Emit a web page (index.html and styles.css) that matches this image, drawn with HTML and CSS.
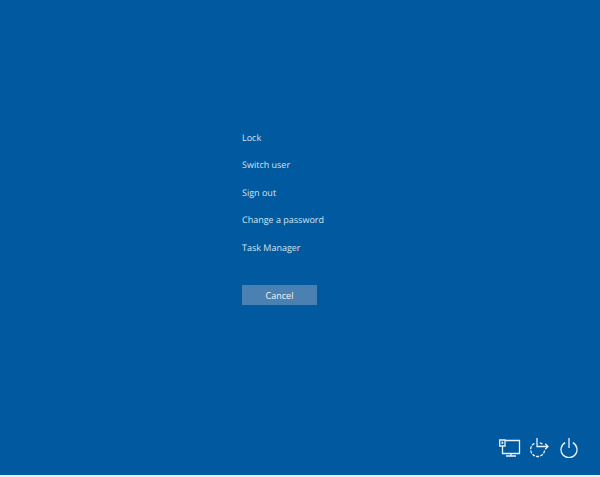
FILE: index.html
```html
<!DOCTYPE html>
<html lang="en">
<head>
<meta charset="utf-8">
<title>Security options</title>
<link rel="stylesheet" href="styles.css">
</head>
<body>
<main class="screen">
  <section class="center">
    <ul class="options">
      <li>Lock</li>
      <li>Switch user</li>
      <li>Sign out</li>
      <li>Change a password</li>
      <li>Task Manager</li>
    </ul>
    <button class="cancel" type="button">Cancel</button>
  </section>
  <footer class="tray">
    <svg class="icon" width="22" height="20" viewBox="0 0 22 20" fill="none" stroke="#e6f2fb" stroke-width="1.3">
      <path d="M6 2.5H20.5V15.5H3.5V8"/>
      <path d="M12 15.5V18M7 18H17"/>
      <path d="M0.7 2H6V8H0.7Z"/>
      <path d="M3.4 3.6V6" stroke-width="1.6"/>
    </svg>
    <svg class="icon" width="22" height="20" viewBox="0 0 22 20" fill="none" stroke="#e6f2fb" stroke-width="1.3">
      <path d="M15.6 12.5A7 7 0 1 1 5.6 5.2" stroke-dasharray="3 1.2"/>
      <path d="M10.8 4.9A7 7 0 0 1 13.4 6"/>
      <path d="M8 0V8.5H19M16.2 5.7L19 8.5L16.2 11.3"/>
    </svg>
    <svg class="icon" width="20" height="20" viewBox="0 0 20 20" fill="none" stroke="#e6f2fb" stroke-width="1.3">
      <path d="M10 0V10"/>
      <path d="M6.2 4.6A8 8 0 1 0 13.8 4.6"/>
    </svg>
  </footer>
</main>
<div class="edge"></div>
</body>
</html>
```
FILE: styles.css
```css
html, body { margin: 0; padding: 0; height: 100%; }
body { display: flex; flex-direction: column; background: #fff; font-family: "Open Sans", "Noto Sans", sans-serif; text-rendering: geometricPrecision; overflow: hidden; }
.screen { flex: 1; display: flex; flex-direction: column; background: #015a9f; color: #d3e4f1; }
.center { flex: 1; padding: 128.5px 0 0 242px; }
.options { list-style: none; margin: 0; padding: 0; display: flex; flex-direction: column; gap: 9.5px; font-size: 9px; line-height: 18px; }
.cancel { display: block; width: 75px; height: 20px; margin-top: 28.5px; padding: 0; border: 0; background: #4a80b2; color: #f0f5fa; font: inherit; font-size: 9px; }
.tray { display: flex; justify-content: flex-end; gap: 8px; padding: 0 21px 17px 0; }
.icon { display: block; }
.edge { height: 2px; background: #e4f4fb; }
```
